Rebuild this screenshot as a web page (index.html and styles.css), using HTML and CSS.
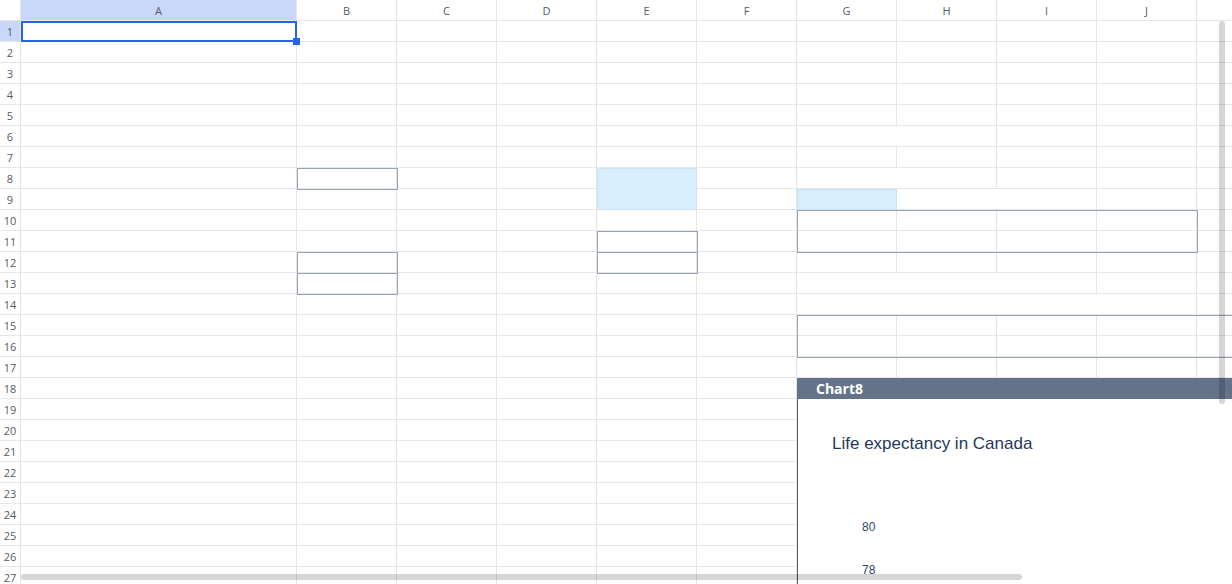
FILE: index.html
```html
<!DOCTYPE html>
<html>
<head>
<meta charset="utf-8">
<link rel="stylesheet" href="styles.css">
</head>
<body>
<div class="sheet">
<span class="corner"></span><span class="ch on">A</span><span class="ch">B</span><span class="ch">C</span><span class="ch">D</span><span class="ch">E</span><span class="ch">F</span><span class="ch">G</span><span class="ch">H</span><span class="ch">I</span><span class="ch">J</span><span class="ch"></span>
<span class="rh on">1</span><span></span><span></span><span></span><span></span><span></span><span></span><span></span><span></span><span></span><span></span><span></span>
<span class="rh">2</span><span></span><span></span><span></span><span></span><span></span><span></span><span></span><span></span><span></span><span></span><span></span>
<span class="rh">3</span><span></span><span></span><span></span><span></span><span></span><span></span><span></span><span></span><span></span><span></span><span></span>
<span class="rh">4</span><span></span><span></span><span></span><span></span><span></span><span></span><span></span><span></span><span></span><span></span><span></span>
<span class="rh">5</span><span></span><span></span><span></span><span></span><span></span><span></span><span></span><span></span><span></span><span></span><span></span>
<span class="rh">6</span><span></span><span></span><span></span><span></span><span></span><span></span><span class="s2"></span><span></span><span></span><span></span>
<span class="rh">7</span><span></span><span></span><span></span><span></span><span></span><span></span><span></span><span></span><span></span><span></span><span></span>
<span class="rh">8</span><span></span><span></span><span></span><span></span><span></span><span></span><span class="s2"></span><span></span><span></span><span></span>
<span class="rh">9</span><span></span><span></span><span></span><span></span><span></span><span></span><span></span><span class="s2"></span><span></span><span></span>
<span class="rh">10</span><span></span><span></span><span></span><span></span><span></span><span></span><span></span><span></span><span></span><span></span><span></span>
<span class="rh">11</span><span></span><span></span><span></span><span></span><span></span><span></span><span></span><span></span><span></span><span></span><span></span>
<span class="rh">12</span><span></span><span></span><span></span><span></span><span></span><span></span><span></span><span></span><span></span><span></span><span></span>
<span class="rh">13</span><span></span><span></span><span></span><span></span><span></span><span></span><span class="s3"></span><span></span><span></span>
<span class="rh">14</span><span></span><span></span><span></span><span></span><span></span><span></span><span class="s4"></span><span></span>
<span class="rh">15</span><span></span><span></span><span></span><span></span><span></span><span></span><span></span><span></span><span></span><span></span><span></span>
<span class="rh">16</span><span></span><span></span><span></span><span></span><span></span><span></span><span></span><span></span><span></span><span></span><span></span>
<span class="rh">17</span><span></span><span></span><span></span><span></span><span></span><span></span><span></span><span></span><span></span><span></span><span></span>
<span class="rh">18</span><span></span><span></span><span></span><span></span><span></span><span></span><span></span><span></span><span></span><span></span><span></span>
<span class="rh">19</span><span></span><span></span><span></span><span></span><span></span><span></span><span></span><span></span><span></span><span></span><span></span>
<span class="rh">20</span><span></span><span></span><span></span><span></span><span></span><span></span><span></span><span></span><span></span><span></span><span></span>
<span class="rh">21</span><span></span><span></span><span></span><span></span><span></span><span></span><span></span><span></span><span></span><span></span><span></span>
<span class="rh">22</span><span></span><span></span><span></span><span></span><span></span><span></span><span></span><span></span><span></span><span></span><span></span>
<span class="rh">23</span><span></span><span></span><span></span><span></span><span></span><span></span><span></span><span></span><span></span><span></span><span></span>
<span class="rh">24</span><span></span><span></span><span></span><span></span><span></span><span></span><span></span><span></span><span></span><span></span><span></span>
<span class="rh">25</span><span></span><span></span><span></span><span></span><span></span><span></span><span></span><span></span><span></span><span></span><span></span>
<span class="rh">26</span><span></span><span></span><span></span><span></span><span></span><span></span><span></span><span></span><span></span><span></span><span></span>
<span class="rh">27</span><span></span><span></span><span></span><span></span><span></span><span></span><span></span><span></span><span></span><span></span><span></span>
</div>

<div class="hl hl-e8"></div>
<div class="hl hl-g9"></div>

<div class="box box-b8"></div>
<div class="box box-b12"></div>
<div class="box box-b13"></div>
<div class="box box-e11"></div>
<div class="box box-e12"></div>
<div class="box box-g10"></div>
<div class="box box-g15"></div>

<div class="sel"></div>
<div class="handle"></div>

<div class="chart">
  <div class="chart-head">Chart8</div>
  <div class="chart-body">
    <div class="chart-title">Life expectancy in Canada</div>
    <div class="axis">
      <span>80</span>
      <span>78</span>
    </div>
  </div>
</div>

<div class="vscroll"></div>
<div class="hscroll"></div>
</body>
</html>
```

FILE: styles.css
```css
html, body {
  margin: 0;
  padding: 0;
}
body {
  width: 1232px;
  height: 584px;
  overflow: hidden;
  position: relative;
  background: #ffffff;
  font-family: "Open Sans", "Noto Sans", sans-serif;
}

.sheet {
  display: grid;
  grid-template-columns: 21px 276px repeat(10, 100px);
  grid-auto-rows: 21px;
  width: 1297px;
}
.sheet span {
  box-sizing: border-box;
  border-right: 1px solid #e6e6e6;
  border-bottom: 1px solid #e6e6e6;
}
.sheet .ch,
.sheet .rh {
  display: flex;
  align-items: center;
  justify-content: center;
  font-size: 11px;
  color: #555b63;
}
.sheet .on {
  background: #c9d7f8;
}
.sheet .s2 { grid-column: span 2; }
.sheet .s3 { grid-column: span 3; }
.sheet .s4 { grid-column: span 4; }

/* light blue highlighted cells */
.hl {
  position: absolute;
  box-sizing: border-box;
  background: #d9eefc;
  border: 1px solid #cce3f6;
}
.hl-e8 { left: 597px; top: 168px; width: 100px; height: 42px; }
.hl-g9 { left: 797px; top: 189px; width: 100px; height: 21px; }

/* outlined ranges */
.box {
  position: absolute;
  box-sizing: border-box;
  border: 1px solid #97a2b2;
}
.box-b8  { left: 297px; top: 168px; width: 101px; height: 22px; }
.box-b12 { left: 297px; top: 252px; width: 101px; height: 22px; }
.box-b13 { left: 297px; top: 273px; width: 101px; height: 22px; }
.box-e11 { left: 597px; top: 231px; width: 101px; height: 22px; }
.box-e12 { left: 597px; top: 252px; width: 101px; height: 22px; }
.box-g10 { left: 797px; top: 210px; width: 401px; height: 43px; }
.box-g15 { left: 797px; top: 315px; width: 500px; height: 43px; }

/* active cell selection */
.sel {
  position: absolute;
  box-sizing: border-box;
  left: 21px;
  top: 21px;
  width: 276px;
  height: 21px;
  border: 2px solid #2463eb;
}
.handle {
  position: absolute;
  left: 293px;
  top: 38px;
  width: 7px;
  height: 7px;
  background: #2463eb;
}

/* chart */
.chart {
  position: absolute;
  left: 797px;
  top: 378px;
  width: 480px;
  height: 220px;
  display: flex;
  flex-direction: column;
}
.chart-head {
  height: 21px;
  flex: none;
  background: #64738a;
  color: #ffffff;
  font-family: "Open Sans", "Noto Sans", sans-serif;
  font-weight: 700;
  font-size: 14px;
  line-height: 21px;
  padding-left: 19px;
}
.chart-body {
  flex: 1;
  background: #ffffff;
  border-left: 1px solid #4f5c72;
  padding: 35px 0 0 34px;
}
.chart-title {
  font-family: "Liberation Sans", Arial, sans-serif;
  font-size: 17px;
  line-height: 20px;
  color: #26385a;
}
.axis {
  margin-top: 66px;
  margin-left: 30px;
  display: flex;
  flex-direction: column;
  gap: 29px;
  font-family: "Liberation Sans", Arial, sans-serif;
  font-size: 12px;
  line-height: 14px;
  color: #34456d;
}

/* scrollbars */
.vscroll {
  position: absolute;
  left: 1219px;
  top: 21px;
  width: 6px;
  height: 383px;
  border-radius: 3px;
  background: rgba(0, 0, 0, 0.16);
}
.hscroll {
  position: absolute;
  left: 21px;
  top: 574px;
  width: 1001px;
  height: 6px;
  border-radius: 3px;
  background: rgba(0, 0, 0, 0.16);
}
```
